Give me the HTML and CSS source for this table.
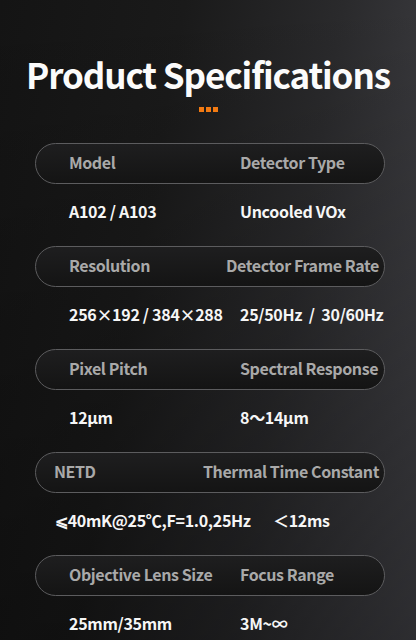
FILE: index.html
```html
<!DOCTYPE html>
<html lang="en">
<head>
<meta charset="utf-8">
<title>Product Specifications</title>
<link rel="stylesheet" href="styles.css">
</head>
<body>
<main class="page">
  <header class="head">
    <h1 class="title">Product Specifications</h1>
    <div class="dots"><span></span><span></span><span></span></div>
  </header>

  <section class="spec">
    <div class="pill"><span class="k">Model</span><span class="k">Detector Type</span></div>
    <div class="vals"><span class="v">A102 / A103</span><span class="v">Uncooled VOx</span></div>
  </section>

  <section class="spec">
    <div class="pill pill--rate"><span class="k">Resolution</span><span class="k">Detector Frame Rate</span></div>
    <div class="vals"><span class="v">256×192 / 384×288</span><span class="v">25/50Hz&nbsp; /&nbsp; 30/60Hz</span></div>
  </section>

  <section class="spec">
    <div class="pill"><span class="k">Pixel Pitch</span><span class="k">Spectral Response</span></div>
    <div class="vals"><span class="v">12μm</span><span class="v">8～14μm</span></div>
  </section>

  <section class="spec">
    <div class="pill pill--netd"><span class="k">NETD</span><span class="k">Thermal Time Constant</span></div>
    <div class="vals vals--netd"><span class="v">⩽40mK@25℃,F=1.0,25Hz</span><span class="v">＜12ms</span></div>
  </section>

  <section class="spec">
    <div class="pill"><span class="k">Objective Lens Size</span><span class="k">Focus Range</span></div>
    <div class="vals"><span class="v">25mm/35mm</span><span class="v">3M~∞</span></div>
  </section>
</main>
</body>
</html>
```

FILE: styles.css
```css
* { box-sizing: border-box; }
html, body { margin: 0; padding: 0; }
body {
  width: 416px;
  height: 640px;
  overflow: hidden;
  font-family: "Noto Sans CJK SC", "Noto Sans", sans-serif;
  background:
    linear-gradient(to bottom, rgba(0,0,0,0) 0%, rgba(0,0,0,0.35) 100%),
    linear-gradient(100deg, #141414 0%, #1a1a1a 35%, #2a2a2c 65%, #45454a 100%);
  color: #fff;
}
.page { padding-top: 52px; }
.head { display: flex; flex-direction: column; align-items: center; }
.title {
  margin: 0;
  font-size: 35px;
  line-height: 44px;
  font-weight: 700;
  color: #fbfbfb;
  letter-spacing: -1.1px;
}
.dots { display: flex; gap: 2px; margin-top: 11px; margin-bottom: 31px; }
.dots span { width: 5px; height: 5px; background: #f27a12; }

.spec { margin-left: 35px; width: 350px; margin-bottom: 8px; }
.pill {
  height: 41px;
  border: 1.5px solid #5c5c5e;
  border-radius: 21px;
  background: linear-gradient(to bottom, #1e1e1f, #141414);
  display: flex;
  align-items: center;
  padding-left: 33px;
  padding-bottom: 3px;
  font-size: 16px;
  font-weight: 700;
  letter-spacing: -0.4px;
  color: #a9a9a9;
  white-space: nowrap;
}
.pill .k:first-child { width: 171px; flex: none; }
.pill--rate .k:first-child { width: 157px; }
.pill--netd { padding-left: 18px; }
.pill--netd .k:first-child { width: 149px; }

.vals {
  height: 54px;
  display: flex;
  align-items: center;
  padding-left: 34px;
  font-size: 16px;
  font-weight: 700;
  letter-spacing: -0.3px;
  color: #f6f6f6;
  white-space: nowrap;
}
.vals .v:first-child { width: 171px; flex: none; }
.vals--netd { padding-left: 20px; }
.vals--netd .v:first-child { width: 218px; }
```
